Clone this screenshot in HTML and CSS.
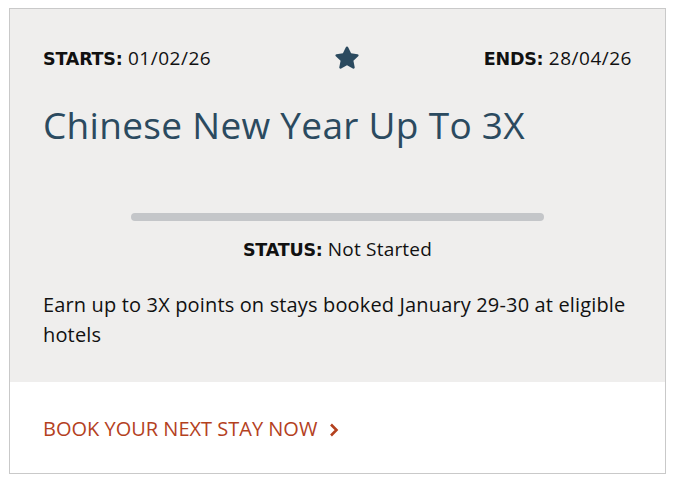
FILE: index.html
```html
<!DOCTYPE html>
<html lang="en">
<head>
<meta charset="utf-8">
<title>Promotion</title>
<link rel="stylesheet" href="styles.css">
</head>
<body>
<div class="card">
  <div class="card-body">
    <div class="dates">
      <div class="date"><span class="label">STARTS:</span> 01/02/26</div>
      <svg class="star" viewBox="0 0 24 24" width="28" height="28" aria-hidden="true">
        <path d="M12 2.2c.5 0 .9.3 1.1.7l2.4 5.1 5.5.7c.9.1 1.3 1.2.6 1.9l-4.1 3.8 1.1 5.5c.2.9-.8 1.6-1.6 1.1L12 18.3 7 21c-.8.5-1.8-.2-1.6-1.1l1.1-5.5-4.1-3.8c-.7-.6-.3-1.8.6-1.9l5.5-.7 2.4-5.1c.2-.4.6-.7 1.1-.7z" fill="#2b4a5f"/>
      </svg>
      <div class="date"><span class="label">ENDS:</span> 28/04/26</div>
    </div>
    <h1 class="title">Chinese New Year Up To 3X</h1>
    <div class="progress"><div class="progress-fill"></div></div>
    <div class="status"><span class="label">STATUS:</span> Not Started</div>
    <p class="desc">Earn up to 3X points on stays booked January 29-30 at eligible hotels</p>
  </div>
  <div class="card-footer">
    <a class="cta" href="#">BOOK YOUR NEXT STAY NOW <svg class="chev" viewBox="0 0 10 14" width="10" height="14" aria-hidden="true"><path d="M2 1.5 7.5 7 2 12.5" fill="none" stroke="#b4411e" stroke-width="2.6"/></svg></a>
  </div>
</div>
</body>
</html>
```
FILE: styles.css
```css
html, body {
  background: #ffffff;
}
body {
  margin: 8px 9px;
  font-family: "Open Sans", "Liberation Sans", Arial, sans-serif;
  color: #111;
}
.card {
  border: 1px solid #c9c9c9;
  box-shadow: 0 0 8px rgba(0,0,0,0.08);
  background: #fff;
}
.card-body {
  background: #efeeed;
  padding: 35px 33px 32px 33px;
}
.dates {
  display: flex;
  justify-content: space-between;
  align-items: center;
  height: 28px;
  font-size: 19px;
  letter-spacing: 0.5px;
}
.label {
  font-family: "DejaVu Sans", sans-serif;
  font-weight: 700;
  font-size: 17.5px;
  letter-spacing: -0.2px;
}
.star {
  display: block;
}
.title {
  margin: 31px 0 0 0;
  font-family: "Open Sans", sans-serif;
  font-weight: 400;
  font-size: 37px;
  letter-spacing: 0.3px;
  line-height: 44px;
  color: #2b4a5f;
}
.progress {
  width: 70%;
  height: 8px;
  margin: 66px auto 0 auto;
  border-radius: 4px;
  background: #c4c6c9;
}
.progress-fill {
  width: 0;
  height: 100%;
}
.status {
  text-align: center;
  font-size: 19px;
  letter-spacing: 0.2px;
  line-height: 24px;
  margin-top: 16px;
}
.desc {
  margin: 28px 0 0 0;
  font-size: 20px;
  letter-spacing: 0.15px;
  line-height: 30px;
}
.card-footer {
  padding: 35px 33px 32px 33px;
}
.cta {
  color: #b4411e;
  text-decoration: none;
  font-size: 20px;
  font-weight: 500;
  line-height: 24px;
}
.chev {
  vertical-align: -1px;
  margin-left: 6px;
}
```
